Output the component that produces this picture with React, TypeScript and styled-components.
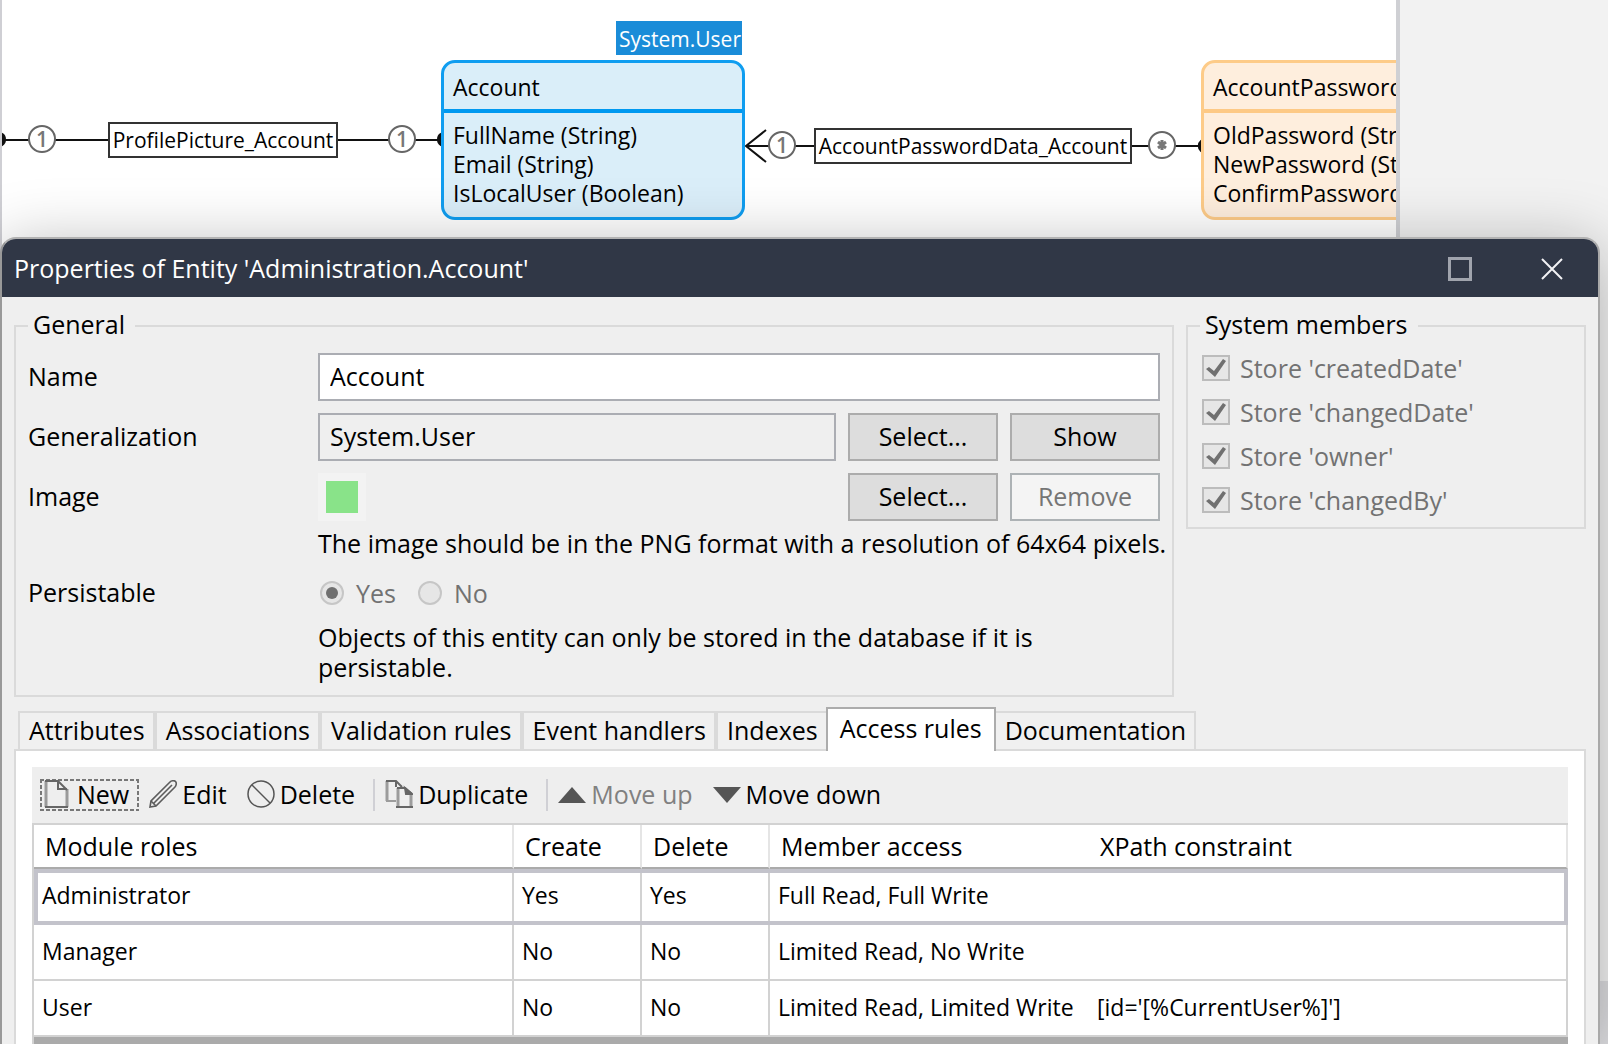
import React, { useState } from "react";
import styled, { createGlobalStyle, css } from "styled-components";

const GlobalStyle = createGlobalStyle`
  *, *::before, *::after { box-sizing: border-box; }
  body {
    margin: 0;
    background: #f2f2f2;
    color: #000;
    font-family: "Open Sans", "Noto Sans", sans-serif;
    font-size: 25px;
    line-height: 30px;
  }
  button, input { font: inherit; color: inherit; margin: 0; }
`;

/* ---------- workspace behind the dialog ---------- */

const Screen = styled.div`
  display: grid;
  grid-template: minmax(100vh, auto) / minmax(0, 1fr);
  overflow: hidden;
`;

const Workspace = styled.div`
  grid-area: 1 / 1;
  display: flex;
  min-width: 0;
`;

const Canvas = styled.section`
  position: relative;
  flex: 1;
  min-width: 0;
  overflow: hidden;
  background: #fff;
  border-left: 2px solid #cfcfd4;
  border-right: 4px solid #cfd0d4;
`;

const SidePane = styled.aside`
  width: 208px;
  display: flex;
  flex-direction: column;
  justify-content: flex-end;
  background: #f2f2f2;
`;

const SideFooter = styled.div`
  height: 63px;
  background: #dcdcdf;
`;

const Edges = styled.svg`
  position: absolute;
  left: 0;
  top: 0;
  width: 1394px;
  height: 238px;
`;

const Entity = styled.article<{ $x: number; $line: string; $fill: string }>`
  position: absolute;
  left: ${(p) => p.$x}px;
  top: 60px;
  width: 304px;
  height: 160px;
  background: ${(p) => p.$fill};
  border: 3px solid ${(p) => p.$line};
  border-radius: 14px;
  padding-left: 9px;
  white-space: nowrap;
  font-size: 23px;
`;

const EntityName = styled.h2<{ $line: string }>`
  height: 50px;
  margin: 0 0 8px -9px;
  padding-left: 9px;
  border-bottom: 4px solid ${(p) => p.$line};
  font: inherit;
  line-height: 48px;
`;

const AttributeList = styled.ul`
  margin: 0;
  padding: 0;
  list-style: none;
  line-height: 29px;
`;

const SourceTag = styled.div`
  position: absolute;
  left: 614px;
  top: 21px;
  height: 34px;
  width: 126px;
  padding-left: 2px;
  background: #1a8cd8;
  color: #fff;
  font-size: 21px;
  line-height: 36px;
  text-align: center;
`;

const EdgeLabel = styled.div<{ $x: number; $y: number; $w: number }>`
  position: absolute;
  left: ${(p) => p.$x}px;
  top: ${(p) => p.$y}px;
  width: ${(p) => p.$w}px;
  height: 36px;
  border: 2px solid #333;
  background: #fff;
  font-size: 21px;
  line-height: 32px;
  text-align: center;
  white-space: nowrap;
`;

const Multiplicity = styled.div<{ $x: number; $y: number }>`
  position: absolute;
  left: ${(p) => p.$x}px;
  top: ${(p) => p.$y}px;
  width: 28px;
  height: 28px;
  display: grid;
  place-items: center;
  border: 2px solid #666;
  border-radius: 50%;
  background: #fff;
  color: #777;
  font-size: 21px;
  font-weight: 600;
  line-height: 24px;
`;

/* ---------- dialog ---------- */

const Dialog = styled.section`
  grid-area: 1 / 1;
  z-index: 1;
  margin: 237px 8px 0 0;
  display: flex;
  flex-direction: column;
  min-width: 0;
  background: #efefef;
  background-clip: padding-box;
  border: 2px solid;
  border-color: #b2b2b2 #a9a9a9 #a9a9a9 #999;
  border-bottom: 0;
  border-radius: 16px 16px 0 0;
  box-shadow: 0 8px 64px rgba(0, 0, 0, 0.28);
`;

const TitleBar = styled.header`
  display: flex;
  align-items: center;
  height: 58px;
  padding: 0 22px 0 12px;
  background: #303746;
  color: #fff;
  border-radius: 14px 14px 0 0;
`;

const Title = styled.h1`
  flex: 1;
  margin: 0;
  font: inherit;
`;

const WindowButtons = styled.div`
  display: flex;
  gap: 44px;
`;

const WindowButton = styled.button`
  display: grid;
  place-items: center;
  width: 48px;
  height: 48px;
  padding: 2px 0 0;
  border: 0;
  background: none;
`;

const Groups = styled.div`
  display: grid;
  grid-template-columns: minmax(0, 1fr) 400px;
  align-items: start;
  gap: 12px;
  padding: 12px 12px 0;
`;

const Group = styled.fieldset<{ $pad: string }>`
  min-width: 0;
  margin: 0;
  padding: ${(p) => p.$pad};
  border: 2px solid #dadada;
`;

const Legend = styled.legend<{ $shift: number }>`
  margin-left: ${(p) => p.$shift}px;
  padding: 0 10px 4px 5px;
`;

const Fields = styled.div`
  display: flex;
  flex-direction: column;
  gap: 12px;
`;

const FieldRow = styled.div<{ $height: number }>`
  display: flex;
  align-items: center;
  gap: 12px;
  height: ${(p) => p.$height}px;
`;

const labelText = css`
  flex: none;
  width: 278px;
  padding-bottom: 2px;
`;
const FieldLabel = styled.label`${labelText}`;
const FieldCaption = styled.span`${labelText}`;

const TextBox = styled.input`
  flex: 1;
  min-width: 0;
  height: 48px;
  padding: 0 10px 2px;
  border: 2px solid #abadb3;
  border-radius: 0;
  background: #fff;
  outline: 0;
  &:read-only { background: #efefef; }
`;

const PushButton = styled.button`
  flex: none;
  width: 150px;
  height: 48px;
  padding: 0 0 2px;
  border: 2px solid #acacac;
  background: #dddddd;
  &:disabled {
    border-color: #adb2b5;
    background: #f4f4f4;
    color: #757575;
  }
`;

const ImageSlot = styled.div`
  flex: 1;
`;

const ImagePreview = styled.div`
  width: 48px;
  height: 48px;
  border: 8px solid #f3f3f3;
  background: #89e389;
`;

const Hint = styled.p<{ $nowrap?: boolean }>`
  margin: 7px 0 1px 290px;
  padding-right: ${(p) => (p.$nowrap ? 0 : 48)}px;
  white-space: ${(p) => (p.$nowrap ? "nowrap" : "normal")};
`;

const RadioSet = styled.div`
  display: flex;
  gap: 22px;
  padding-left: 2px;
`;

const Choice = styled.label<{ $gap: number }>`
  display: flex;
  align-items: center;
  gap: ${(p) => p.$gap}px;
  color: #727272;
`;

const Radio = styled.input`
  appearance: none;
  display: grid;
  place-items: center;
  width: 24px;
  height: 24px;
  border: 2px solid #c6c6c6;
  border-radius: 50%;
  background: #e6e6e6;
  &:checked::after {
    content: "";
    width: 12px;
    height: 12px;
    border-radius: 50%;
    background: #707070;
  }
`;

const MemberChoice = styled(Choice)`
  height: 44px;
`;

const CheckBox = styled.input`
  appearance: none;
  width: 28px;
  height: 26px;
  border: 2px solid #bcbcbc;
  background: #e6e6e6;
  &:checked::after {
    content: "";
    display: block;
    width: 24px;
    height: 22px;
    background: #707070;
    clip-path: polygon(2px 12px, 5px 10px, 10px 14px, 19px 2px, 22px 4px, 11px 20px);
  }
`;

/* ---------- tabs ---------- */

const TabList = styled.div`
  display: flex;
  align-items: flex-end;
  padding: 10px 16px 0;
`;

const Tab = styled.button`
  flex: none;
  height: 38px;
  padding: 0 8px 2px 9px;
  border: 2px solid #dadada;
  border-bottom: 0;
  background: #f0f0f0;
  line-height: 34px;
  &[aria-selected="true"] {
    position: relative;
    height: 44px;
    margin: 0 -2px -2px;
    padding: 0 12px 4px;
    border-color: #acacac;
    background: #fff;
  }
`;

const TabPanel = styled.div`
  flex: 1;
  display: flex;
  flex-direction: column;
  margin: 0 12px;
  padding: 16px 16px 0;
  border: 2px solid #dadada;
  border-bottom: 0;
  background: #fff;
`;

const Toolbar = styled.div`
  display: flex;
  align-items: center;
  gap: 6px;
  height: 56px;
  padding: 0 8px;
  background: #eeeeee;
`;

const ToolButton = styled.button`
  display: flex;
  align-items: center;
  gap: 5px;
  height: 32px;
  padding: 0 10px 2px 4px;
  border: 0;
  background: none;
  line-height: 30px;
  svg { display: block; flex: none; }
  &[data-current="true"] {
    --across: repeating-linear-gradient(90deg, #777 0 4px, transparent 4px 6px);
    --down: repeating-linear-gradient(180deg, #777 0 4px, transparent 4px 6px);
    background:
      var(--across) top / 100% 2px no-repeat,
      var(--across) bottom / 100% 2px no-repeat,
      var(--down) left / 2px 100% no-repeat,
      var(--down) right / 2px 100% no-repeat;
  }
  &:disabled { color: #808080; }
`;

const Separator = styled.span`
  width: 2px;
  height: 32px;
  margin-left: 2px;
  background: #d0d0d5;
`;

const GridArea = styled.div`
  flex: 1;
  border: 2px solid #d2d2d2;
  border-width: 2px 0 0 2px;
  background: #aaaaaa;
`;

const RuleTable = styled.table`
  width: 100%;
  table-layout: fixed;
  border-collapse: separate;
  border-spacing: 0;
  background: #fff;
`;

const HeadCell = styled.th<{ $width?: number; $open?: boolean }>`
  width: ${(p) => (p.$width ? `${p.$width}px` : "auto")};
  height: 44px;
  padding: 0 0 0 11px;
  border-right: ${(p) => (p.$open ? "0" : "2px solid #e5e5e5")};
  border-bottom: 2px solid #ababab;
  font-weight: 400;
  text-align: left;
`;

const RuleRow = styled.tr<{ $selected: boolean }>`
  ${(p) =>
    p.$selected &&
    css`
      outline: 4px solid #c3c3cb;
      outline-offset: -4px;
    `}
`;

const Cell = styled.td<{ $open?: boolean }>`
  height: 56px;
  padding: 0 0 3px 8px;
  border-right: ${(p) => (p.$open ? "0" : "2px solid #d2d2d2")};
  border-bottom: 2px solid #d2d2d2;
  font-size: 23px;
  white-space: nowrap;
`;

/* ---------- icons ---------- */

const PageIcon = () => (
  <svg width="28" height="28" viewBox="0 0 28 28" fill="none" stroke="#666" strokeWidth="2">
    <path d="M2 1V27M23 9V27" stroke="#9a9a9a" strokeWidth="3" />
    <path d="M1 1H14L23 10M1 27H24" />
    <path d="M14 1V9H23" />
  </svg>
);
const PencilIcon = () => (
  <svg width="28" height="28" viewBox="0 0 28 28" fill="none" stroke="#5c5c5c" strokeWidth="1.6">
    <path d="M1 27L2 21L21 2C22 1 25 0 26.500 1.500C28 3 27 6 26 7L7 26Z" />
    <path d="M2 21L7 26M5 23L23 5" />
  </svg>
);
const DeleteIcon = () => (
  <svg width="28" height="28" viewBox="0 0 28 28" fill="none" stroke="#555" strokeWidth="1.5">
    <circle cx="14" cy="14" r="13" />
    <path d="M5 5L23 23" />
  </svg>
);
const CopyIcon = () => (
  <svg width="28" height="28" viewBox="0 0 28 28" fill="none" stroke="#666" strokeWidth="2">
    <path d="M2 1V21M13 8V27M26 14V27" stroke="#9c9c9c" strokeWidth="3" />
    <path d="M1 21H11" stroke="#9c9c9c" />
    <path d="M1 1H11L17 7M11 1V7" />
    <path d="M12 8H20L27 14M11 27H28" />
    <path d="M20 8L27 14H21Z" fill="#666" />
  </svg>
);
const UpIcon = () => (
  <svg width="28" height="28" viewBox="0 0 28 28" fill="#555">
    <path d="M14 7L28 23H0Z" />
  </svg>
);
const DownIcon = () => (
  <svg width="28" height="28" viewBox="0 0 28 28" fill="#555">
    <path d="M0 7H28L14 23Z" />
  </svg>
);

/* ---------- data ---------- */

const TABS = [
  "Attributes",
  "Associations",
  "Validation rules",
  "Event handlers",
  "Indexes",
  "Access rules",
  "Documentation",
];

const MEMBERS = ["createdDate", "changedDate", "owner", "changedBy"];

const RULES = [
  { role: "Administrator", create: "Yes", remove: "Yes", access: "Full Read, Full Write", xpath: "" },
  { role: "Manager", create: "No", remove: "No", access: "Limited Read, No Write", xpath: "" },
  { role: "User", create: "No", remove: "No", access: "Limited Read, Limited Write", xpath: "[id='[%CurrentUser%]']" },
];

function DomainModel() {
  return (
    <Canvas aria-label="Domain model">
      <Edges viewBox="0 0 1394 238" fill="none" stroke="#111" strokeWidth="2">
        <path d="M0 140H438" />
        <path d="M0 134A5 6 0 0 1 0 145Z" fill="#111" />
        <path d="M439 134A5 6 0 0 0 439 145Z" fill="#111" />
        <path d="M744 146H1199M764 130L744 146L764 162" />
        <path d="M1199 141A5 6 0 0 0 1199 151Z" fill="#111" />
      </Edges>
      <EdgeLabel $x={106} $y={122} $w={230}>ProfilePicture_Account</EdgeLabel>
      <EdgeLabel $x={812} $y={128} $w={318}>AccountPasswordData_Account</EdgeLabel>
      <Multiplicity $x={26} $y={125}>1</Multiplicity>
      <Multiplicity $x={386} $y={125}>1</Multiplicity>
      <Multiplicity $x={766} $y={131}>1</Multiplicity>
      <Multiplicity $x={1146} $y={131}>
        <svg width="12" height="12" viewBox="0 0 12 12" stroke="#777" strokeWidth="3">
          <path d="M6 1V11M2 3L10 9M10 3L2 9" />
        </svg>
      </Multiplicity>
      <SourceTag>System.User</SourceTag>
      <Entity $x={439} $line="#0f9df0" $fill="#daeef9">
        <EntityName $line="#0099f0">Account</EntityName>
        <AttributeList>
          <li>FullName (String)</li>
          <li>Email (String)</li>
          <li>IsLocalUser (Boolean)</li>
        </AttributeList>
      </Entity>
      <Entity $x={1199} $line="#fdcb88" $fill="#feeedd">
        <EntityName $line="#fdc985">AccountPasswordData</EntityName>
        <AttributeList>
          <li>OldPassword (String)</li>
          <li>NewPassword (String)</li>
          <li>ConfirmPassword (String)</li>
        </AttributeList>
      </Entity>
    </Canvas>
  );
}

function GeneralGroup() {
  const [name, setName] = useState("Account");
  return (
    <Group $pad="10px 12px 12px">
      <Legend $shift={0}>General</Legend>
      <Fields>
        <FieldRow $height={48}>
          <FieldLabel htmlFor="entity-name">Name</FieldLabel>
          <TextBox id="entity-name" value={name} onChange={(e) => setName(e.target.value)} />
        </FieldRow>
        <FieldRow $height={48}>
          <FieldLabel htmlFor="entity-parent">Generalization</FieldLabel>
          <TextBox id="entity-parent" value="System.User" readOnly />
          <PushButton type="button">Select...</PushButton>
          <PushButton type="button">Show</PushButton>
        </FieldRow>
        <div>
          <FieldRow $height={48}>
            <FieldCaption>Image</FieldCaption>
            <ImageSlot>
              <ImagePreview />
            </ImageSlot>
            <PushButton type="button">Select...</PushButton>
            <PushButton type="button" disabled>Remove</PushButton>
          </FieldRow>
          <Hint $nowrap>The image should be in the PNG format with a resolution of 64x64 pixels.</Hint>
        </div>
        <div>
          <FieldRow $height={44}>
            <FieldCaption id="persistable">Persistable</FieldCaption>
            <RadioSet role="radiogroup" aria-labelledby="persistable">
              <Choice $gap={12}>
                <Radio type="radio" name="persistable" defaultChecked disabled />
                Yes
              </Choice>
              <Choice $gap={12}>
                <Radio type="radio" name="persistable" disabled />
                No
              </Choice>
            </RadioSet>
          </FieldRow>
          <Hint>Objects of this entity can only be stored in the database if it is persistable.</Hint>
        </div>
      </Fields>
    </Group>
  );
}

function AccessRules() {
  return (
    <TabPanel role="tabpanel" aria-label="Access rules">
      <Toolbar role="toolbar">
        <ToolButton type="button" data-current="true"><PageIcon />New</ToolButton>
        <ToolButton type="button"><PencilIcon />Edit</ToolButton>
        <ToolButton type="button"><DeleteIcon />Delete</ToolButton>
        <Separator />
        <ToolButton type="button"><CopyIcon />Duplicate</ToolButton>
        <Separator />
        <ToolButton type="button" disabled><UpIcon />Move up</ToolButton>
        <ToolButton type="button"><DownIcon />Move down</ToolButton>
      </Toolbar>
      <GridArea>
        <RuleTable>
          <thead>
            <tr>
              <HeadCell $width={480}>Module roles</HeadCell>
              <HeadCell $width={128}>Create</HeadCell>
              <HeadCell $width={128}>Delete</HeadCell>
              <HeadCell $width={319} $open>Member access</HeadCell>
              <HeadCell>XPath constraint</HeadCell>
            </tr>
          </thead>
          <tbody>
            {RULES.map((rule, i) => (
              <RuleRow key={rule.role} $selected={i === 0}>
                <Cell>{rule.role}</Cell>
                <Cell>{rule.create}</Cell>
                <Cell>{rule.remove}</Cell>
                <Cell $open>{rule.access}</Cell>
                <Cell>{rule.xpath}</Cell>
              </RuleRow>
            ))}
          </tbody>
        </RuleTable>
      </GridArea>
    </TabPanel>
  );
}

export default function App() {
  return (
    <>
      <GlobalStyle />
      <Screen>
        <Workspace>
          <DomainModel />
          <SidePane>
            <SideFooter />
          </SidePane>
        </Workspace>
        <Dialog role="dialog" aria-labelledby="dialog-title">
          <TitleBar>
            <Title id="dialog-title">Properties of Entity 'Administration.Account'</Title>
            <WindowButtons>
              <WindowButton type="button" aria-label="Maximize">
                <svg width="24" height="24" viewBox="0 0 24 24" fill="none" stroke="#a0a4ad" strokeWidth="3">
                  <path d="M1.500 1.500H22.500V22.500H1.500Z" />
                </svg>
              </WindowButton>
              <WindowButton type="button" aria-label="Close">
                <svg width="24" height="24" viewBox="0 0 24 24" stroke="#f2f2f4" strokeWidth="2">
                  <path d="M2 2L22 22M22 2L2 22" />
                </svg>
              </WindowButton>
            </WindowButtons>
          </TitleBar>
          <Groups>
            <GeneralGroup />
            <Group $pad="3px 14px 5px">
              <Legend $shift={-2}>System members</Legend>
              {MEMBERS.map((member) => (
                <MemberChoice key={member} $gap={10}>
                  <CheckBox type="checkbox" defaultChecked disabled />
                  {`Store '${member}'`}
                </MemberChoice>
              ))}
            </Group>
          </Groups>
          <TabList role="tablist">
            {TABS.map((tab) => (
              <Tab key={tab} type="button" role="tab" aria-selected={tab === "Access rules"}>
                {tab}
              </Tab>
            ))}
          </TabList>
          <AccessRules />
        </Dialog>
      </Screen>
    </>
  );
}
